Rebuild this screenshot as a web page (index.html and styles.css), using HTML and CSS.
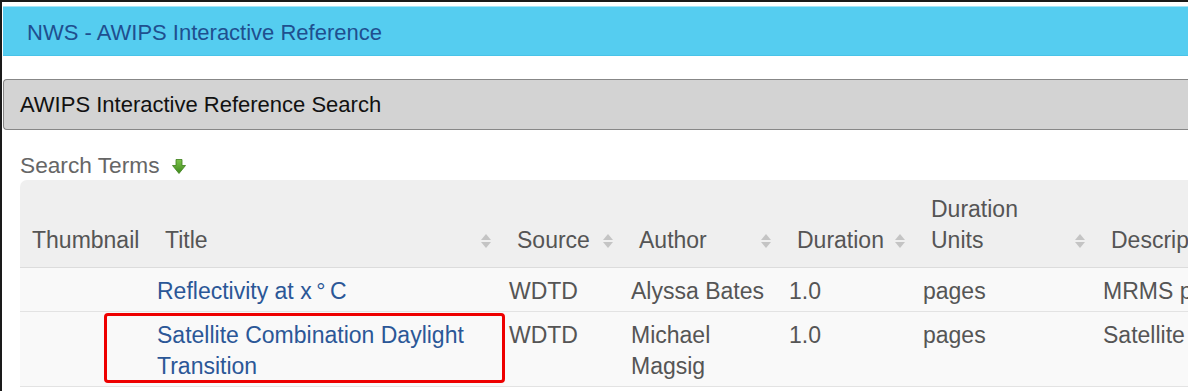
FILE: index.html
```html
<!DOCTYPE html>
<html>
	<head>
		<title>NWS - AWIPS Interactive Reference</title>
		<link rel="stylesheet" href="styles.css">
	</head>
	<body>
		<div class="frame">
			<div class="topbar">NWS - AWIPS Interactive Reference</div>
			<div class="panel-head">AWIPS Interactive Reference Search</div>
			<div class="content">
				<div class="terms">Search Terms
					<svg class="terms-arrow" width="14" height="15" viewBox="0 0 14 15">
						<defs>
							<linearGradient id="g" x1="0" y1="0" x2="0" y2="1">
								<stop offset="0" stop-color="#7cc24a"/>
								<stop offset="1" stop-color="#3f8a1c"/>
							</linearGradient>
						</defs>
						<path d="M4 0.5 H10 V6.5 H13.5 L7 14.5 L0.5 6.5 H4 Z" fill="url(#g)" stroke="#3c7f1c" stroke-width="0.8"/>
					</svg>
				</div>
				<table class="results">
					<colgroup>
						<col style="width:133px">
						<col style="width:352px">
						<col style="width:122px">
						<col style="width:158px">
						<col style="width:134px">
						<col style="width:180px">
						<col style="width:220px">
					</colgroup>
					<thead>
						<tr>
							<th class="first">Thumbnail</th>
							<th>Title<span class="sort"></span></th>
							<th>Source<span class="sort"></span></th>
							<th>Author<span class="sort"></span></th>
							<th>Duration<span class="sort"></span></th>
							<th>Duration<br>Units<span class="sort"></span></th>
							<th>Description<span class="sort"></span></th>
						</tr>
					</thead>
					<tbody>
						<tr>
							<td></td>
							<td><a href="#">Reflectivity at x&thinsp;°&thinsp;C</a></td>
							<td>WDTD</td>
							<td>Alyssa Bates</td>
							<td>1.0</td>
							<td>pages</td>
							<td>MRMS products</td>
						</tr>
						<tr>
							<td></td>
							<td><a href="#">Satellite Combination Daylight Transition</a></td>
							<td>WDTD</td>
							<td>Michael Magsig</td>
							<td>1.0</td>
							<td>pages</td>
							<td>Satellite Information</td>
						</tr>
					</tbody>
				</table>
			</div>
			<div class="highlight"></div>
		</div>
	</body>
</html>
```

FILE: styles.css
```css
html, body {
	margin: 0;
	height: 100%;
	overflow: hidden;
	background: #fff;
	font-family: "Liberation Sans", Arial, sans-serif;
}
.frame {
	position: relative;
	height: 100%;
	border-top: 2px solid #1a1a1a;
	border-left: 2px solid #1a1a1a;
	padding-left: 1px;
	box-sizing: border-box;
}
.topbar {
	margin-top: 4px;
	height: 45px;
	padding-top: 3px;
	line-height: 45px;
	background: #55cdf0;
	border-top: 1px solid #a6e3f6;
	border-bottom: 1px solid #49c3e8;
	padding-left: 24px;
	font-size: 22px;
	color: #1f4f8f;
	white-space: nowrap;
}
.panel-head {
	margin-top: 23px;
	height: 49px;
	line-height: 49px;
	background: #d3d3d3;
	border: 1px solid #878787;
	border-right: none;
	border-radius: 4px 0 0 4px;
	padding-left: 16px;
	font-size: 22px;
	color: #111;
	white-space: nowrap;
}
.content {
	padding-left: 17px;
}
.terms {
	margin-top: 20px;
	height: 30px;
	line-height: 30px;
	font-size: 22.7px;
	color: #666;
	white-space: nowrap;
}
.terms-arrow {
	margin-left: 6px;
	vertical-align: -1px;
}
.results {
	table-layout: fixed;
	width: 1299px;
	border-collapse: separate;
	border-spacing: 0;
	font-size: 23px;
	line-height: 31px;
	color: #555;
}
.results th {
	position: relative;
	background: #efefef;
	text-align: left;
	font-weight: normal;
	vertical-align: bottom;
	padding: 14px 12px 11px 12px;
	border-bottom: 1px solid #dcdcdc;
	white-space: nowrap;
}
.results th.first {
	border-top-left-radius: 7px;
}
.results td {
	background: #f9f9f9;
	vertical-align: top;
	padding: 8px 4px 4px 4px;
	border-bottom: 1px solid #e3e3e3;
}
.results a {
	color: #2b5797;
	text-decoration: none;
}
.sort {
	position: absolute;
	right: 13px;
	bottom: 19px;
	width: 12px;
	height: 14px;
}
.sort::before,
.sort::after {
	content: "";
	position: absolute;
	left: 1px;
	border-left: 5px solid transparent;
	border-right: 5px solid transparent;
}
.sort::before {
	top: 0;
	border-bottom: 6px solid #c4c4c4;
}
.sort::after {
	bottom: 0;
	border-top: 6px solid #c4c4c4;
}
.highlight {
	position: absolute;
	left: 102px;
	top: 311px;
	width: 395px;
	height: 64px;
	border: 3px solid #ee0000;
	border-radius: 4px;
}
```
